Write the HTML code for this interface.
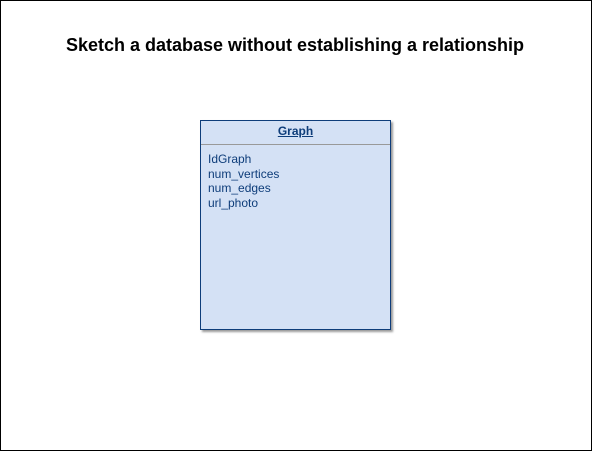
<!DOCTYPE html>
<html><head><style>
html,body{margin:0;padding:0}
body{width:592px;height:451px;position:relative;background:#fff;font-family:"Liberation Sans",sans-serif;overflow:hidden}
.frame{position:absolute;left:0;top:0;width:590px;height:449px;border:1px solid #000}
.title{position:absolute;left:0;width:590px;top:35px;text-align:center;font-weight:bold;font-size:18px;color:#000}
.box{position:absolute;left:200px;top:120px;width:189px;height:208px;background:#d4e1f5;border:1px solid #0e3d7a;box-shadow:2px 2px 2px #9a9a9a}
.hd{height:23px;line-height:21px;text-align:center;font-weight:bold;text-decoration:underline;font-size:12px;color:#0e3d7a;border-bottom:1px solid #999}
.fields{padding:7px 0 0 7px;font-size:12px;line-height:14.7px;color:#0e3d7a}
</style></head><body>
<div class="frame"></div>
<div class="title">Sketch a database without establishing a relationship</div>
<div class="box"><div class="hd">Graph</div>
<div class="fields">IdGraph<br>num_vertices<br>num_edges<br>url_photo</div></div>
</body></html>
